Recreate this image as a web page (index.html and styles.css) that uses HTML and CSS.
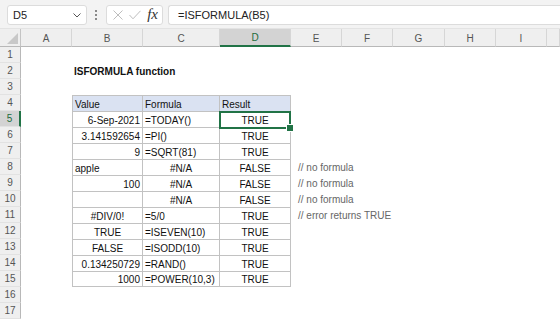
FILE: index.html
```html
<!DOCTYPE html>
<html lang="en">
<head>
  <meta charset="UTF-8">
  <title>ISFORMULA function</title>
  <link rel="stylesheet" href="styles.css">
</head>
<body>

<!-- Formula bar -->
<div class="topbar">
  <div class="namebox">
    <span>D5</span>
    <svg width="8" height="5" viewBox="0 0 8 5"><path d="M0.5 0.5 L4 4 L7.5 0.5" fill="none" stroke="#555" stroke-width="1"/></svg>
  </div>
  <div class="dots"><i></i><i></i><i></i></div>
  <div class="iconbox">
    <svg width="10" height="10" viewBox="0 0 10 10"><path d="M0.5 0.5 L9.5 9.5 M9.5 0.5 L0.5 9.5" stroke="#bdbdbd" stroke-width="1" fill="none"/></svg>
    <svg width="12" height="10" viewBox="0 0 12 10"><path d="M0.5 5 L4 8.8 L11.5 0.8" stroke="#bdbdbd" stroke-width="1" fill="none"/></svg>
    <span class="fx">fx</span>
  </div>
  <div class="formula">=ISFORMULA(B5)</div>
</div>

<!-- Sheet -->
<div class="sheet" id="sheet"></div>

<script>
  const cols = ['A', 'B', 'C', 'D', 'E', 'F', 'G', 'H', 'I', ''];

  const data = {
    2:  { B: ['ISFORMULA function', 'l title'] },
    4:  { B: ['Value', 'l'], C: ['Formula', 'l'], D: ['Result', 'l'] },
    5:  { B: ['6-Sep-2021', 'r'], C: ['=TODAY()', 'l'], D: ['TRUE', 'c'] },
    6:  { B: ['3.141592654', 'r'], C: ['=PI()', 'l'], D: ['TRUE', 'c'] },
    7:  { B: ['9', 'r'], C: ['=SQRT(81)', 'l'], D: ['TRUE', 'c'] },
    8:  { B: ['apple', 'l'], C: ['#N/A', 'c'], D: ['FALSE', 'c'], E: ['// no formula', 'l note'] },
    9:  { B: ['100', 'r'], C: ['#N/A', 'c'], D: ['FALSE', 'c'], E: ['// no formula', 'l note'] },
    10: { B: ['', 'r'], C: ['#N/A', 'c'], D: ['FALSE', 'c'], E: ['// no formula', 'l note'] },
    11: { B: ['#DIV/0!', 'c'], C: ['=5/0', 'l'], D: ['TRUE', 'c'], E: ['// error returns TRUE', 'l note'] },
    12: { B: ['TRUE', 'c'], C: ['=ISEVEN(10)', 'l'], D: ['TRUE', 'c'] },
    13: { B: ['FALSE', 'c'], C: ['=ISODD(10)', 'l'], D: ['TRUE', 'c'] },
    14: { B: ['0.134250729', 'r'], C: ['=RAND()', 'l'], D: ['TRUE', 'c'] },
    15: { B: ['1000', 'r'], C: ['=POWER(10,3)', 'l'], D: ['TRUE', 'c'] }
  };

  function buildSheet() {
    const sheet = document.getElementById('sheet');
    let html = '<div class="corner"><div class="tri"></div></div>';
    cols.forEach(c => {
      html += `<div class="colhead${c === 'D' ? ' sel' : ''}">${c}</div>`;
    });
    for (let r = 1; r <= 17; r++) {
      html += `<div class="rowhead${r === 5 ? ' sel' : ''}">${r}</div>`;
      cols.forEach(c => {
        const cell = (data[r] && data[r][c]) || ['', ''];
        let cls = 'cell ' + cell[1];
        if (r >= 4 && r <= 15 && c && 'BCD'.includes(c)) {
          cls += ' t';
          if (r === 4) cls += ' hd';
          if (c === 'B') cls += ' tl';
          if (r === 15) cls += ' tb';
          if (r === 5 && c === 'D') cls += ' active';
        }
        html += `<div class="${cls}">${cell[0]}</div>`;
      });
    }
    sheet.innerHTML = html;
  }

  buildSheet();
</script>

</body>
</html>
```

FILE: styles.css
```css
* {
  box-sizing: border-box;
}
body {
  margin: 0;
  font-family: "Liberation Sans", Arial, sans-serif;
  font-size: 10px;
  color: #111;
  background: #fff;
  overflow: hidden;
}
.topbar {
  height: 29px;
  background: #f3f3f3;
  display: flex;
  align-items: flex-start;
  padding: 5px 0 0 7px;
  border-bottom: 1px solid #e3e3e3;
}
.namebox, .iconbox, .formula {
  height: 20px;
  background: #fff;
  border: 1px solid #dcdcdc;
  border-radius: 3px;
  display: flex;
  align-items: center;
}
.namebox {
  width: 80px;
  justify-content: space-between;
  padding: 0 5px 0 5px;
  font-size: 11px;
  color: #222;
}
.dots {
  width: 3px;
  margin: 0 8px;
  height: 20px;
  display: flex;
  flex-direction: column;
  justify-content: center;
  gap: 2px;
}
.dots i {
  display: block;
  width: 2px;
  height: 2px;
  background: #8a8a8a;
}
.iconbox {
  width: 57px;
  padding: 0 4px 0 6px;
  justify-content: space-between;
}
.fx {
  font-family: "Liberation Serif", serif;
  font-style: italic;
  font-size: 15px;
  color: #333;
  margin-top: -2px;
}
.formula {
  flex: 1;
  margin-left: 5px;
  padding-left: 9px;
  border-right: none;
  border-radius: 3px 0 0 3px;
  font-size: 11px;
  color: #222;
}

.sheet {
  display: grid;
  grid-template-columns: 21px 51px 71px 77px 71px 51px 51px 52px 51px 51px 1fr;
  grid-template-rows: 18px;
  grid-auto-rows: 16px;
}
.corner, .colhead, .rowhead {
  background: #efefef;
  color: #555;
  display: flex;
  align-items: center;
  justify-content: center;
}
.corner {
  border-right: 1px solid #c4c4c4;
  border-bottom: 1px solid #b8b8b8;
  align-items: flex-end;
  justify-content: flex-end;
  padding: 0 2px 2px 0;
}
.tri {
  width: 11px;
  height: 11px;
  background: #c8c8c8;
  clip-path: polygon(100% 0, 100% 100%, 0 100%);
}
.colhead {
  border-right: 1px solid #d6d6d6;
  border-bottom: 1px solid #b8b8b8;
  padding-top: 1px;
}
.colhead.sel {
  background: #d3d3d3;
  color: #1d6b3c;
  border-bottom: 2px solid #217346;
}
.rowhead {
  border-right: 1px solid #b8b8b8;
  border-bottom: 1px solid #e2e2e2;
}
.rowhead.sel {
  background: #d3d3d3;
  color: #1d6b3c;
  border-right: 2px solid #217346;
}
.cell {
  display: flex;
  align-items: center;
  padding: 1px 2px 0 2px;
  white-space: nowrap;
}
.cell.l { justify-content: flex-start; }
.cell.r { justify-content: flex-end; }
.cell.c { justify-content: center; }
.title {
  font-weight: bold;
}
.note {
  padding-left: 7px;
  color: #666;
}
.t {
  border-top: 1px solid #c2c2c2;
  border-right: 1px solid #c2c2c2;
}
.t.tl {
  border-left: 1px solid #c2c2c2;
}
.t.tb {
  border-bottom: 1px solid #c2c2c2;
}
.t.hd {
  background: #dae2f2;
}
.active {
  position: relative;
}
.active::after {
  content: "";
  position: absolute;
  top: -1px;
  left: -1px;
  right: -1px;
  bottom: -2px;
  border: 2px solid #217346;
}
.active::before {
  content: "";
  position: absolute;
  right: -4px;
  bottom: -5px;
  width: 6px;
  height: 6px;
  background: #217346;
  border: 1px solid #fff;
  z-index: 1;
}
```
